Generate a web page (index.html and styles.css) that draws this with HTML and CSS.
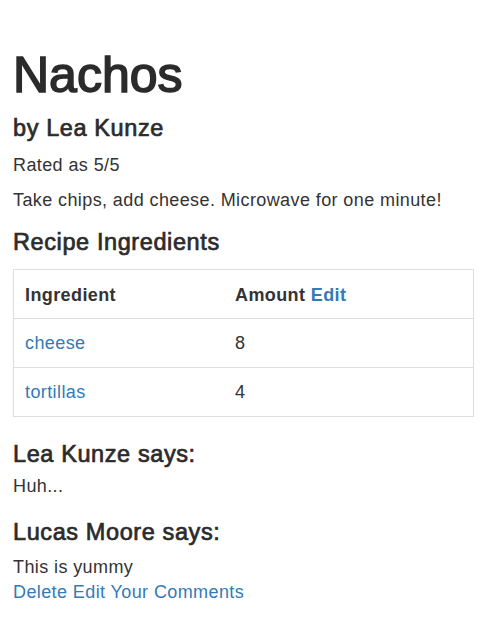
FILE: index.html
```html
<!DOCTYPE html>
<html lang="en">
<head>
<meta charset="utf-8">
<title>Nachos</title>
<link rel="stylesheet" href="styles.css">
</head>
<body>
<div class="page">
  <h1 class="title">Nachos</h1>
  <h4 class="subhead author">by Lea Kunze</h4>
  <p class="text rating">Rated as 5/5</p>
  <p class="text desc">Take chips, add cheese. Microwave for one minute!</p>
  <h4 class="subhead section-title">Recipe Ingredients</h4>
  <table class="ingredients">
    <thead>
      <tr>
        <th class="col-name">Ingredient</th>
        <th>Amount <a class="link" href="#">Edit</a></th>
      </tr>
    </thead>
    <tbody>
      <tr>
        <td><a class="link" href="#">cheese</a></td>
        <td>8</td>
      </tr>
      <tr>
        <td><a class="link" href="#">tortillas</a></td>
        <td>4</td>
      </tr>
    </tbody>
  </table>
  <div class="comment first">
    <h4 class="subhead">Lea Kunze says:</h4>
    <p class="text comment-body">Huh...</p>
  </div>
  <div class="comment second">
    <h4 class="subhead">Lucas Moore says:</h4>
    <p class="text comment-body">This is yummy</p>
    <p class="text actions"><a class="link" href="#">Delete</a> <a class="link" href="#">Edit Your Comments</a></p>
  </div>
</div>
</body>
</html>
```

FILE: styles.css
```css
html, body {
  margin: 0;
  padding: 0;
  background: #ffffff;
}

body {
  font-family: "Liberation Sans", Arial, Helvetica, sans-serif;
  color: #333333;
  font-size: 18px;
  letter-spacing: 0.4px;
}

.page {
  padding: 48px 6px 0 13px;
}

.title {
  margin: 0;
  font-size: 50px;
  line-height: 55px;
  font-weight: 400;
  letter-spacing: 0;
  color: #2b2b2b;
  -webkit-text-stroke: 1.6px #2b2b2b;
}

.subhead {
  margin: 0;
  font-size: 23.5px;
  line-height: 26px;
  font-weight: 400;
  letter-spacing: 0.6px;
  color: #2b2b2b;
  -webkit-text-stroke: 0.7px #2b2b2b;
}

.author {
  margin-top: 12px;
}

.text {
  margin: 0;
  line-height: 24px;
}

.rating {
  margin-top: 12px;
}

.desc {
  margin-top: 11px;
}

.section-title {
  margin-top: 17px;
}

.link {
  color: #337ab7;
  text-decoration: none;
}

.ingredients {
  margin-top: 14px;
  width: 100%;
  border-collapse: collapse;
  border: 1px solid #dddddd;
}

.ingredients tr {
  border-top: 1px solid #dddddd;
}

.ingredients th,
.ingredients td {
  padding: 11px 11px;
  line-height: 26px;
  text-align: left;
  vertical-align: top;
}

.ingredients th {
  font-weight: 700;
  padding-top: 12px;
  padding-bottom: 10px;
}

.ingredients .col-name {
  width: 188px;
}

.comment.first {
  margin-top: 24px;
}

.comment.second {
  margin-top: 21px;
}

.comment-body {
  margin-top: 7px;
}

.comment.second .comment-body {
  margin-top: 10px;
}

.actions {
  margin-top: 1px;
}
```
